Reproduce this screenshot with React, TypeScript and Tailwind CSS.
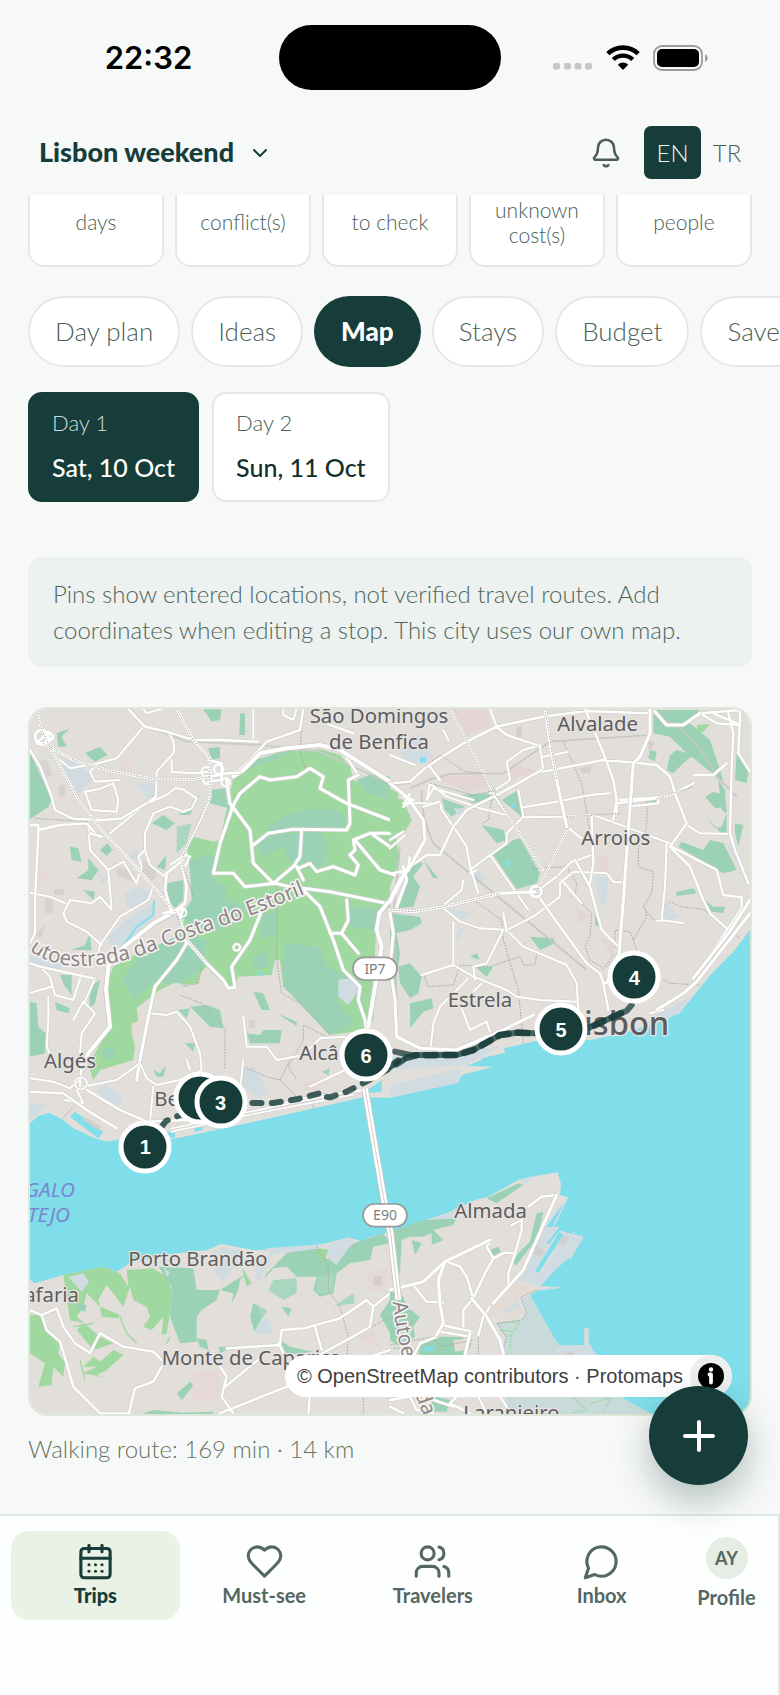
import type { ReactNode } from "react";
import { Bell, CalendarDays, ChevronDown, Plus } from "lucide-react";

const GREEN = "#9fd99f";
const TEAL = "#9bd2b5";
const HAZE = "#d0dce1";
const WATER = "#80deea";

const stats = ["days", "conflict(s)", "to check", "unknown cost(s)", "people"];
const tabs = ["Day plan", "Ideas", "Map", "Stays", "Budget", "Saved"];

/* Pin centres in map units (the view box is 2160 x 2115, starting at 30, 27). */
const pins = [
  { n: 1, x: 376, y: 1340 },
  { n: 2, x: 540, y: 1195 },
  { n: 3, x: 602, y: 1207 },
  { n: 4, x: 1843, y: 832 },
  { n: 5, x: 1623, y: 988 },
  { n: 6, x: 1038, y: 1066 },
];

function Road({ d, w = 9, casing = "#d5d2cf" }: { d: string; w?: number; casing?: string }) {
  return (
    <g fill="none" strokeLinecap="round" strokeLinejoin="round">
      <path d={d} stroke={casing} strokeWidth={w + 3} />
      <path d={d} stroke="#ffffff" strokeWidth={w - 1} />
    </g>
  );
}

function Border({ d }: { d: string }) {
  return <path d={d} fill="none" stroke="#aaa6a3" strokeWidth="3" strokeDasharray="5 4" />;
}

function Shield({ x, y, label }: { x: number; y: number; label: string }) {
  return (
    <g>
      <rect x={x - 66} y={y - 34} width="132" height="68" rx="34" fill="#fff" stroke="#999" strokeWidth="5" />
      <text x={x} y={y + 15} textAnchor="middle" fontSize="42" fill="#7d7d7d">
        {label}
      </text>
    </g>
  );
}

function CityMap() {
  return (
    <svg
      viewBox="30 27 2160 2115"
      preserveAspectRatio="xMidYMid slice"
      className="block size-full font-['Noto_Sans',sans-serif]"
      role="img"
      aria-label="Map of Lisbon"
    >
      <rect x="0" y="0" width="2220" height="2180" fill="#e2dfdb" />

      {/* river */}
      <path
        fill={WATER}
        d="M30 1270 L55 1248 88 1238 130 1260 160 1285 225 1315 260 1325 300 1318 455 1318 700 1266 1030 1192 1110 1193 1315 1148 1325 1125 1420 1100 1340 1098 1385 1080 1385 1075 1455 1058 1452 1045 1550 1022 1710 1020 1810 1000 1940 960 1990 925 2080 815 2140 755 2190 690 V2142 H1895 L1810 2100 1725 1960 1707 1930 1705 1885 1693 1885 1693 1935 1620 1937 1597 1905 1530 1785 1555 1770 1618 1762 1555 1758 1580 1720 1595 1715 1635 1660 1650 1670 1690 1610 1630 1595 1575 1580 1643 1492 1620 1485 1623 1452 1613 1417 1550 1427 1500 1438 1450 1465 1405 1490 1365 1500 1300 1530 1260 1555 1215 1560 1110 1595 1050 1610 1030 1625 985 1612 920 1630 850 1640 760 1650 700 1650 605 1632 560 1650 430 1665 330 1690 290 1715 250 1700 130 1725 45 1750 30 1740Z"
      />

      {/* north-west */}
      <path
        fill={GREEN}
        d="M640 235 L690 190 780 155 900 148 960 165 990 200 1000 240 1110 290 1150 300 1175 360 1150 395 1125 400 1140 480 1110 560 1110 620 1070 650 1065 760 1060 960 1040 990 930 1005 840 910 790 860 780 780 765 780 755 825 655 830 640 865 610 850 560 800 540 820 535 850 485 855 480 840 420 870 380 900 350 925 355 960 335 1000 345 1040 340 1080 240 1110 220 1140 205 1095 270 980 250 880 280 800 380 745 470 720 520 590 500 430 520 410 580 425 600 420Z"
      />
      <path
        fill={TEAL}
        d="M508 480 L560 465 600 480 575 530 615 560 620 600 680 620 640 670 600 690 550 700 480 650 515 600Z M360 760 L490 700 560 720 545 810 480 850 400 850 340 900 320 850 290 870Z M750 375 L800 345 880 325 950 330 975 350 980 395 820 390 745 400Z M710 440 L745 405 840 400 835 490 805 480 790 440 730 470Z M850 400 L900 395 925 430 920 480 885 515 840 490Z M790 730 L900 740 920 800 980 830 950 900 1000 970 930 1005 840 910 790 860Z M985 620 L1080 625 1070 690 990 680Z M1010 240 L1060 220 1110 230 1110 300 1040 280Z M640 225 L700 180 830 148 780 175 700 200Z M730 640 L765 640 765 700 720 720Z M700 770 L735 755 750 800 700 810Z M850 240 L875 290 862 290Z M245 1050 L285 1040 280 1075 250 1075Z
        M30 160 L50 200 95 300 85 320 30 358Z M110 100 L150 85 125 110 140 140 115 140Z M195 160 L240 140 262 165 225 185Z M550 28 H605 L600 60 575 65Z M660 40 H675 V105 H658Z M565 145 L600 140 600 175 575 180Z M575 270 L615 265 625 325 570 310Z M395 370 L430 345 465 370 440 390Z M150 440 L175 445 185 485 155 480Z M205 475 L235 510 215 540 170 535 205 510Z M240 450 L262 430 277 450 260 468Z M440 550 L490 540 490 600 465 625 440 600Z M410 500 L440 465 435 510Z M30 905 L50 910 55 980 78 1000 75 1060 30 1070Z M210 860 L240 840 225 910 208 925Z M155 750 L195 735 210 700 215 750Z M120 825 L155 825 155 885 135 860Z M105 905 L150 925 145 940 110 930Z M190 570 L225 575 220 600Z M510 920 L560 915 600 930 610 985 570 980 540 950Z M475 930 L510 925 500 955Z M700 875 L730 880 750 930 725 930Z M770 940 L830 965 830 978Z M680 1000 L720 1005 730 990 785 990 780 1030 690 1030Z M495 1030 L525 1030 520 1055Z M540 285 L510 345 475 345 510 320Z"
      />
      <path fill="#abd7c0" d="M470 380 L515 370 500 430 470 460Z" />
      <path
        fill={HAZE}
        d="M115 170 L160 185 205 215 215 240 165 290 120 205Z M345 245 L400 250 410 280 385 300Z M315 580 L355 560 395 580 390 610 320 625Z M265 710 L330 650 400 610 400 650 310 740 270 735Z M955 840 L990 835 1015 860 1010 880 985 915 955 890Z M30 765 L130 790 120 810 30 790Z M320 480 L355 445 355 480Z M230 520 L255 530 250 560Z"
      />
      <path
        fill="#d6d2cf"
        d="M60 185 L80 178 98 225 78 235Z M118 255 H136 V290 H118Z M75 595 L100 600 98 640 75 640Z M102 568 H133 V585 H102Z M290 500 L345 515 340 545 290 525Z M370 480 L400 500 410 530 390 545 360 520Z M50 700 L80 670 60 720Z M685 960 H705 V985 H685Z"
      />
      <path
        fill="#e6dad3"
        d="M300 190 L340 180 330 215 305 215Z M45 520 L100 525 80 545 45 540Z M335 970 L370 960 360 1000 335 1000Z M225 385 L260 370 270 400Z"
      />
      <path d="M402 602 L400 645 350 680 305 745 M712 825 L722 818 730 826" fill="none" stroke={WATER} strokeWidth="6" />
      <path
        d="M330 27 L380 80 500 125 720 135 900 155 1110 250"
        fill="none"
        stroke="#c9cbc9"
        strokeWidth="5"
      />
      <Border d="M770 560 L770 780 785 880 840 910 930 1005 M480 885 L545 910 615 985 615 1110 M545 800 L535 850 485 860 M850 30 L840 150 855 205 M920 1010 L850 975 850 1020 805 1100 830 1140" />
      <Road
        w={7}
        d="M375 75 L290 175 235 190 210 215 225 245 300 240 M440 95 Q470 120 460 160 L410 215 408 290 380 310 270 400 M455 180 V215 L520 220 565 215 M700 27 V125 M215 330 L195 275 235 268 280 250 295 300 290 335Z M465 265 L440 285 380 310 M465 265 L490 268 530 295 515 325 490 335 450 320 400 340 375 400 375 450 390 495 435 530 M205 370 L210 450 265 510 310 485 350 550 365 500 355 470 375 450 M265 515 L275 630 240 590 215 610 150 600 130 640 140 665 200 695 245 735 M30 578 L90 590 135 610 M400 560 L385 600 300 650 240 735 235 760 M60 800 L90 830 105 885 160 900 185 820 M30 878 L95 860 M85 890 L85 960 80 1040 100 1090 M190 905 L225 940 185 1000 180 1060 M190 905 L160 960 M225 835 L195 905 M120 180 L150 205 235 190 M370 27 L380 40 425 27 M790 27 V45 L820 60 830 27 M435 520 V600 M650 732 A10 10 0 1 0 651 732 M670 950 L680 1040 740 1040 770 1080 850 1065 900 1015 975 1010 M385 940 L440 945 470 935 510 980 540 1060 545 1110 490 1145"
      />
      <Road
        w={8}
        d="M325 27 L375 80 440 95 520 120 600 120 715 125 M850 27 L840 90 740 125 690 180 640 225 M30 150 L60 200 95 290 105 330 160 357 250 360 305 355 380 310 M30 375 L55 375 55 400 45 600 45 700 30 730 M55 390 L120 375 200 370 235 410 M30 790 L60 800 220 835 M1015 225 L975 165 M890 60 L1000 100"
      />
      <Road
        w={10}
        casing="#cdd0cb"
        d="M620 240 L630 310 690 390 700 490 760 550 820 500 840 470 845 390 M635 330 L600 430 580 520 640 520 675 560 765 550 850 570 900 620 940 720 970 810 1020 860 1015 900 1035 960 1040 990 M635 325 L660 280 720 230 750 240 830 230 870 205 910 230 900 265 980 310 1110 360 M700 435 L745 400 820 388 980 390 990 370 985 240 1015 225 M830 500 L850 540 M835 505 L870 490 890 515 940 500 1005 525 1015 495 990 465 1005 450 1000 420 1050 400 1110 400 M1005 420 L1080 510 1125 525 M1060 405 L1110 440 M850 565 L930 575 1100 610 M980 600 L985 660 965 700 930 700 M965 700 L1015 760 M475 640 L500 730 470 780 405 860 385 950 360 1080 350 1140 M500 720 L560 790 610 840 625 865 645 862 635 800 690 720 730 620"
      />
      <Road
        w={13}
        casing="#cbc8c6"
        d="M455 640 L400 670 300 750 265 800 258 870 270 980 205 1060 185 1110 M640 230 L670 210 720 160 800 145 900 135 960 150 1110 245 M1110 600 L1078 640 1070 690 1085 740 1065 860 1045 980"
      />
      <Road
        w={9}
        d="M50 30 L65 90 100 160 170 290 240 385 330 480 400 560 470 640 M70 130 L160 180 280 215 400 237 520 238 570 230 620 220 660 218 M470 27 L520 120 570 175 570 290 540 360 495 450 485 490 500 560 495 610 455 640 M455 640 L435 570 440 520 490 480 M565 180 L605 190 605 240 565 245 M45 110 a20 20 0 1 0 40 0 a20 20 0 1 0 -40 0 M70 135 L100 110 85 95 50 130Z M210 400 L245 410 M430 640 L490 625 480 655"
      />
      <path
        d="M545 215 a14 14 0 1 0 28 0 a14 14 0 1 0 -28 0 M582 208 a14 14 0 1 0 28 0 a14 14 0 1 0 -28 0 M550 240 a12 12 0 1 0 24 0 a12 12 0 1 0 -24 0 M605 247 a12 12 0 1 0 24 0 a12 12 0 1 0 -24 0 M475 638 a12 12 0 1 0 24 0 a12 12 0 1 0 -24 0 M75 110 a12 12 0 1 0 24 0 a12 12 0 1 0 -24 0 M450 495 L495 465 510 470 495 500"
        fill="none"
        stroke="#fff"
        strokeWidth="6"
      />
      <Border d="M50 30 L65 90 100 160 170 290 240 385 330 480 400 560 470 640 L500 720 560 790 M70 130 L160 180 280 215 400 237 520 238 570 230 M470 27 L520 120 570 175 570 290 495 450 485 490 520 590 M45 355 L205 365" />

      {/* north-east */}
      <g transform="translate(1110 0)">
        <path
          fill={TEAL}
          d="M790 30 L930 30 900 70 960 120 1000 240 985 235 880 150 840 110 790 100Z M840 165 L860 150 910 165 880 190 850 220 830 210Z M780 150 L800 155 795 185 775 175Z M875 425 L940 450 960 420 1000 430 1040 510 1000 520 865 440Z M945 290 L970 275 1000 285 1005 320 975 325Z M950 350 L975 385 995 380 1010 340 1010 405 965 400 990 395Z M1035 370 L1060 375 1045 440 1035 400Z M1040 160 L1075 215 1070 250 1035 240Z M985 240 L1005 270 1010 340 995 330Z M310 465 L370 420 390 415 450 520 440 550 380 568Z M258 355 L275 375 340 390 350 420 320 430Z M335 300 L385 270 395 350Z M155 295 L225 320 185 350 165 330Z M200 285 L300 280 310 300 250 310Z M420 710 L490 715 495 730 450 750Z M25 800 L60 790 95 830 85 880 60 895 30 850Z M60 910 L125 895 130 925 100 935 60 985Z M240 770 L260 760 270 780Z M255 800 L310 800 290 830Z M0 640 L90 650 95 670 60 690 20 700 30 760 10 900 0 840Z M60 480 L100 490 70 530 90 560 70 620 20 625Z M100 480 L145 535 130 535Z M615 650 L628 645 628 680 615 675Z M860 575 L910 565 920 580 860 588Z M945 600 L970 620 1005 620 1000 640 965 635Z M735 298 H800 V306 H735Z"
        />
        <path fill={GREEN} d="M920 75 L960 72 940 95 925 100Z M0 265 L25 280 20 320 65 360 45 395 0 400Z" />
        <path
          fill={HAZE}
          d="M25 150 L80 100 130 180 50 190Z M610 530 H655 L650 600 635 625Z M820 630 L840 615 870 655 820 660Z M245 540 L265 510 285 540 270 555Z M165 625 L240 640 215 660Z M200 690 L225 685 200 730Z M1010 430 L1040 450 1075 540 1070 550Z M190 325 L230 325 205 345Z M790 950 L900 890 870 940 800 965Z M0 1070 L330 1040 230 1095 0 1110Z"
        />
        <path
          fill="#e3d6d4"
          d="M185 27 H290 L305 75 230 110Z M620 470 H655 V510 H615Z M630 715 L680 730 665 770Z M365 190 L440 210 350 250Z M130 230 L280 225 300 265 230 275Z M555 620 L600 650 570 670Z"
        />
        <path fill="#d3cfcd" d="M380 85 L395 75 395 110 380 115Z M570 205 L605 195 600 220 575 220Z M775 120 L795 130 775 155Z" />
        <path fill={WATER} d="M90 172 H107 V188 H90Z M345 480 H358 V500 H348Z M365 312 H378 V322 H365Z" />
        <path
          d="M95 270 Q90 340 130 430 L300 570 590 810 M60 265 L130 235 180 222 340 220 480 125 780 105 M30 440 L10 640 20 900 M830 60 Q920 110 980 230 L1040 290"
          fill="none"
          stroke="#c6c6c4"
          strokeWidth="5"
        />
        <Border d="M520 125 L575 250 600 400 610 480 M60 250 L15 255 M772 305 L770 380 745 440 745 500 790 515 785 580 760 620 790 660 810 660 M765 625 L770 650 730 720 720 695 675 690 675 740 M430 505 L530 500 560 550 555 590 605 640 600 710 585 740 600 780 640 805 675 760 M730 720 L740 750 M250 600 L335 660 340 720 385 870 400 1030 M100 820 L115 860 190 855 210 795 300 800 390 770 400 795 435 795 440 760 M820 625 L840 605 870 620 940 628 1050 715 M820 840 L840 850 930 855 M305 300 L295 360 275 370 M690 760 L650 800" />
        <Road
          w={7}
          d="M0 165 L75 195 M450 135 L400 150 350 185 360 240 300 280 M460 170 L535 155 M450 140 L460 210 M400 322 L500 305 600 285 660 280 M400 352 L520 350 600 345 M610 345 L720 385 840 430 M385 270 L400 350 350 400 350 430 300 465 240 510 M890 375 L930 400 1020 402 M830 430 L825 560 815 660 880 670 M800 662 L830 662 M120 250 L170 290 270 325 350 345 M130 265 L250 300 M120 250 L110 300 130 265 M150 305 L155 330 190 380 230 440 240 500 265 580 M40 310 L150 310 M300 465 L415 630 M350 690 L270 685 210 665 155 620 215 570 220 540 M350 690 L430 650 510 590 510 550 550 515 650 520 670 545 705 548 M515 540 L575 610 M190 665 V795 L250 830 350 870 380 890 450 900 560 905 M190 795 L95 825 M340 690 L290 790 250 800 255 840 M350 690 L400 740 530 795 560 850 565 930 M235 835 L150 920 130 970 120 1060 M215 925 L240 990 290 965 300 995 M0 420 L40 395 M0 445 L45 405 M250 875 L275 850 M820 930 L780 940 M240 520 L260 510 M175 120 L160 90 M550 480 L500 530 M605 465 L550 485"
        />
        <Road
          w={8}
          d="M0 250 L60 245 110 200 220 130 320 80 460 50 590 33 780 40 M180 27 L230 120 290 240 320 295 370 370 460 510 M300 27 L320 80 350 105 440 135 M455 210 L330 280 230 330 190 380 150 465 110 465 60 500 M585 27 L620 110 650 185 670 240 680 300 670 360 M460 215 L640 180 730 188 800 195 840 230 855 280 890 370 840 440 M680 340 L680 310 800 295 855 280 910 250 M910 225 L970 225 1010 190 M1050 40 L1045 160 1080 215 M1015 40 L1030 100 1025 200 1020 400 1035 450 1075 550 M845 445 L900 500 940 600 960 640 1015 690 M845 440 L980 510 1000 585 1055 592 1055 625 910 840 M440 575 L535 385 M530 380 L575 415 M440 575 L500 530 M555 480 L600 560 635 690 685 740 M605 350 L610 490 600 550 M450 595 L510 680 590 790 630 820 640 850 655 930 M640 850 L700 830 M685 760 L650 850 M100 320 L150 305 M715 320 L805 310 805 292 690 300 M120 200 L150 240 M930 40 L1050 30 1050 75 980 70Z M970 40 L1040 70 M340 640 L350 695"
        />
        <Road
          w={10}
          d="M465 27 L480 130 500 240 530 380 M780 27 L780 100 750 170 730 190 715 390 700 600 685 790 M0 630 L70 635 160 620 330 580 440 575 M422 575 a16 16 0 1 0 32 0 a16 16 0 1 0 -32 0 M0 250 L50 290 100 360 105 420 60 500 30 540 0 600 M20 620 L50 540 40 500 M795 35 L830 75 880 75 930 40 M1080 600 L1015 700 910 835 M1080 640 L920 845 880 880 800 930 M0 640 L10 700 0 800 15 900 20 1010 90 1045 200 1050 340 990 430 945"
        />
        <path
          d="M0 610 L30 550 55 500 60 470 M5 520 L60 510 M20 560 L60 500 30 520 M40 290 L70 300 40 320 60 280"
          fill="none"
          stroke="#fff"
          strokeWidth="7"
          strokeLinejoin="round"
        />
        <Border d="M180 27 L230 120 290 240 370 370 460 510 M0 630 L70 635 160 620 330 580 M105 200 L150 165 225 215 285 220 M120 250 L250 285 320 270 M440 575 L535 385 M465 27 L500 240 M530 350 L690 340 M800 297 L910 260" />
      </g>

      {/* south-west */}
      <g transform="translate(0 1080)">
        <path
          fill={GREEN}
          d="M130 645 L250 620 300 640 325 680 320 630 400 625 440 650 455 690 450 760 440 820 425 825 430 770 395 810 370 800 390 770 380 740 340 720 330 680 310 740 260 675 235 720 240 740 300 765 295 775 245 770 240 740 200 700 190 740 170 770 240 830 280 850 220 870 170 810 190 790 150 780Z M30 765 L65 765 80 800 120 840 115 880 135 910 130 950 100 920 95 975 55 980 75 910 30 880Z M190 920 L220 890 240 905 280 870 310 885 260 930 230 945 300 970 260 955 190 940 230 920Z M665 620 L695 670 680 680Z M880 560 L925 570 910 620 880 600Z"
        />
        <path d="M300 770 L320 820 350 850 M180 900 L195 960 M160 800 L220 790 M450 830 L440 850" fill="none" stroke={GREEN} strokeWidth="4" />
        <path
          fill={TEAL}
          d="M415 620 L520 625 530 690 600 690 680 640 660 660 655 690 635 730 640 700 600 690 590 720 545 750 530 770 530 845 480 850 450 770 455 680Z M740 640 L800 580 880 560 900 600 960 590 1000 550 1090 520 1110 550 1060 560 1050 600 990 610 950 640 940 700 900 710 880 690 890 650 830 650 800 620 760 625 730 660Z M700 730 L740 750 705 820 690 770Z M780 840 L810 860 880 875 800 885Z M595 860 L640 860 600 880Z M530 835 L560 840 565 870 540 860Z M470 1000 L510 965 522 975 485 1020Z M370 1060 L400 1050 490 1058 580 1055 575 1065 H370Z M1080 765 L1110 720 1110 820Z M165 730 L200 735 195 755 175 750Z M400 30 L418 40 438 18 430 50 410 50Z M905 35 L930 25 925 45Z M785 740 L815 745 805 770Z"
        />
        <path fill="#a9d6be" d="M760 660 L830 655 830 700 790 720 745 690Z M890 650 L945 640 935 700 890 700Z M940 740 L1000 700 1005 730Z M710 730 L740 760 720 765Z" />
        <path
          fill={HAZE}
          d="M145 650 L190 640 207 665 185 695Z M575 580 L610 560 660 570 650 610 610 670 580 630Z M705 600 L760 580 720 660 710 660Z M730 765 L755 790 755 825 700 820Z M920 555 L990 532 1000 545 950 615 930 600Z M225 90 L260 75 310 115 290 140Z M30 130 L80 130 60 160 30 180Z M670 30 L700 20 745 95 720 115 665 80Z M430 620 L450 640 440 650Z M740 565 L920 552 900 565 750 585Z"
        />
        <path fill="#e5d8d6" d="M1040 640 L1100 620 1100 695 1045 690Z M520 940 L600 930 600 1020 515 1020Z M850 65 L890 60 890 90 855 90Z M1000 830 L1060 810 1080 860Z" />
        <path fill={WATER} d="M150 170 L165 155 250 215 235 235Z M430 215 L465 215 465 235 440 230Z M525 205 L550 200 545 212 522 215Z M570 205 L600 200 600 206Z M1050 85 L1085 60 1085 95 1040 100Z" />
        <path fill="#d3cfcd" d="M195 170 L245 200 235 210 190 180Z M1060 648 H1086 V678 H1060Z" />
        <Border d="M890 560 L925 620 925 690 960 740 985 830 980 900 M670 20 L740 50 780 60 830 110 M780 60 L810 0 M130 175 L160 140 M880 120 V150 M985 840 L1110 770 M1030 1065 L1030 1000" />
        <Road
          w={7}
          d="M400 80 L390 185 M190 80 L290 60 360 10 380 55 410 75 480 60 520 40 M670 0 L660 90 M200 150 L150 120 M30 55 L100 65 150 85 180 60 M185 0 L180 80 M135 120 L190 130 170 90 M500 0 L510 30 M870 80 L975 30 M1110 30 L1060 40"
        />
        <Road
          w={8}
          d="M30 95 L130 100 200 150 290 205 M200 90 L300 150 380 185 500 180 660 165 850 115 1030 90 M30 750 L65 765 110 745 130 800 165 850 210 880 240 820 310 860 400 875 425 900 M65 765 L80 810 120 845 140 910 160 980 240 1060 M425 920 L400 965 345 985 325 1065 M240 1060 H330 M600 920 L620 950 605 1010 640 1060 M610 985 L720 895 M780 855 L620 865 M780 855 L785 810 850 805 960 775 1040 720 1060 740 1110 700 M775 850 L790 880 M870 900 L990 835 1050 800 1060 740 M885 800 L905 870 M600 1060 L900 940 M865 1065 L870 1000 M1050 890 L1110 870"
        />
        <Road w={6} d="M455 205 L700 153 1000 92 M455 215 L700 162 1000 104 M165 70 a18 18 0 1 0 36 0 a18 18 0 1 0 -36 0" />
      </g>

      {/* south-east */}
      <g transform="translate(1110 1080)">
        <path fill="#c8dbda" d="M320 790 L395 780 410 760 395 715 420 705 487 825 510 857 590 855 615 880 700 1015 785 1062 350 1062 340 880 345 830Z" />
        <path
          fill={HAZE}
          d="M385 660 L430 555 455 500 510 500 480 550 435 635 450 640 480 600 520 515 580 535 540 590 490 635 450 680Z M320 755 L370 710 390 735 380 760Z M0 75 L215 25 205 68 0 113Z M390 358 L440 347 400 375Z M105 480 L200 450 200 470 120 490Z M497 870 L510 857 590 855 583 805 H595 V850 L620 885 H500Z"
        />
        <path fill="#d2cfce" d="M435 555 L465 570 455 590 425 580Z M520 525 L540 535 525 560 508 550Z M530 875 H552 V885 H530Z" />
        <path
          fill={TEAL}
          d="M290 415 L385 370 400 375 320 430Z M0 515 L100 480 200 475 190 495 130 510 160 540 125 555 125 520 95 530 60 530 35 540 30 640 15 650Z M65 540 L95 550 75 585Z M440 460 L460 455 450 500 430 550 380 615 365 610 385 580 420 545 430 500Z M300 570 L325 560 333 575 310 588Z M0 690 L40 710 50 740 90 770 70 800 75 830 30 860 0 840Z M75 860 L150 830 215 830 245 850 230 885 90 885Z M140 1010 L180 1020 170 1055 100 1055Z"
        />
        <path fill="#e3dcd6" d="M350 680 L400 670 440 690 390 715 330 760 310 775 390 740 410 760 350 780 290 760Z M190 840 L240 835 230 870 195 875Z" />
        <path fill={WATER} d="M435 632 L508 515 520 525 445 640Z M470 550 L510 500 514 506 476 554Z M100 865 L135 855 130 870 105 875Z" />
        <path d="M320 790 L390 785 370 815 330 810 M350 830 L365 825 360 870 M550 1010 L590 1050 540 1060 M600 1030 L660 1015 640 1060 M10 865 H30" fill="none" stroke="#a6dbb2" strokeWidth="4" />
        <path d="M465 500 L530 415 M533 412 L490 500 M445 690 L508 682 M520 560 L555 515 M540 598 L578 528" fill="none" stroke={HAZE} strokeWidth="5" />
        <Border d="M440 690 L392 712 410 760 395 780 320 790 350 830 335 880 M0 855 L130 830 150 860 250 840 M265 825 V885" />
        <Road
          w={8}
          d="M500 405 L455 410 415 440 M365 495 L395 480 395 510 375 580 355 640 355 685 M300 545 L290 560 310 595 345 578 375 580 M310 595 L285 640 250 715 220 750 220 800 M170 605 L210 620 230 650 250 715 M70 675 L110 725 160 728 M300 740 L280 770 265 825 M140 830 L90 850 70 890 M0 1020 L60 1010 80 1050 130 1060 M200 1010 L180 1030 240 1060 M265 1010 L290 1060 M330 1010 L350 1040 M0 1040 L40 1060 M150 815 L240 830 245 815 155 795Z M100 1010 L190 1040"
        />
        <Road
          w={10}
          d="M500 405 L440 540 400 630 350 685 310 730 M300 540 L165 605 100 665 0 690 M165 605 L145 660 150 730 160 790 140 825 M245 715 L290 770 330 840 340 880 M240 820 L225 885"
        />
      </g>

      {/* suspension bridge */}
      <path d="M1035 1165 L1092 1500 1112 1600 1135 1800" fill="none" stroke="#c9c7c5" strokeWidth="22" />
      <path d="M1035 1165 L1092 1500 1112 1600 1135 1800" fill="none" stroke="#fff" strokeWidth="17" />
      <path d="M1035 1165 L1092 1500 1112 1600 1135 1800" fill="none" stroke="#d2d0ce" strokeWidth="3" />

      <defs>
        <path id="a5" d="M28 750 Q90 800 190 798 Q300 795 400 752 Q480 722 560 694 Q660 662 860 580 L920 555" />
        <path id="a2" d="M1118 1806 Q1132 1930 1160 2010 T1222 2180" />
      </defs>
      <g fontSize="62" fill="#8f8587" stroke="#f4f2f1" strokeWidth="10" strokeLinejoin="round" paintOrder="stroke">
        <text>
          <textPath href="#a5">utoestrada da Costa do Estoril</textPath>
        </text>
        <text>
          <textPath href="#a2">Autoestrada</textPath>
        </text>
      </g>
      <Shield x={1065} y={806} label="IP7" />
      <Shield x={1095} y={1546} label="E90" />
      <g fontSize="61" fill="#5c5c5e" stroke="#e6e3e0" strokeWidth="8" strokeLinejoin="round" paintOrder="stroke">
        <text x="1077" y="70" textAnchor="middle">São Domingos</text>
        <text x="1077" y="147" textAnchor="middle">de Benfica</text>
        <text x="1612" y="92">Alvalade</text>
        <text x="1684" y="435">Arroios</text>
        <text x="1283" y="922">Estrela</text>
        <text x="838" y="1080">Alcântara</text>
        <text x="72" y="1104">Algés</text>
        <text x="403" y="1218">Belém</text>
        <text x="325" y="1697">Porto Brandão</text>
        <text x="177" y="1805" textAnchor="end">Trafaria</text>
        <text x="425" y="1994">Monte de Caparica</text>
        <text x="1303" y="1553">Almada</text>
        <text x="1330" y="2159">Laranjeiro</text>
        <text x="1948" y="1006" textAnchor="end" fontSize="98" fontWeight="500">Lisbon</text>
      </g>
      <g fontSize="62" fontStyle="italic" fill="#7a86d2" textAnchor="end">
        <text x="165" y="1490">GARGALO</text>
        <text x="150" y="1567">DO TEJO</text>
      </g>

      {/* walking route */}
      <g fill="none" stroke="#173d3a" strokeLinecap="round" strokeLinejoin="round">
        <path
          strokeWidth="18"
          strokeDasharray="27 31"
          opacity="0.82"
          d="M425 1280 L438 1263 480 1245 540 1220 600 1215 690 1209 760 1209 830 1198 898 1180 905 1190 930 1192 980 1175 1038 1145 1110 1105 1150 1080"
        />
        <path
          strokeWidth="18"
          opacity="0.75"
          d="M1125 1055 L1170 1065 1310 1065 1360 1050 1440 1005 1490 998 1550 1000 1630 995 1710 982 1770 955 1820 932 1835 915"
        />
        <path
          strokeWidth="20"
          strokeDasharray="30 28"
          opacity="0.85"
          d="M1110 1100 L1140 1078 1190 1066 1310 1065 1360 1050 1440 1005 1490 998 1550 1000 1630 995 1710 982 1770 955 1820 932"
        />
      </g>
    </svg>
  );
}

function Glyph({ children }: { children: ReactNode }) {
  return (
    <svg
      viewBox="0 0 24 24"
      className="size-[39px]"
      fill="none"
      stroke="currentColor"
      strokeWidth="1.9"
      strokeLinecap="round"
      strokeLinejoin="round"
      aria-hidden="true"
    >
      {children}
    </svg>
  );
}

function StatusBar() {
  return (
    <div className="grid grid-cols-[1fr_222px_1fr] items-center pt-[25px]">
      <span className="pl-[18px] text-center font-['Inter',sans-serif] text-[31px] leading-[64px] font-semibold text-black">22:32</span>
      <div className="h-[65px] rounded-full bg-black" />
      <div className="flex items-center justify-end gap-[13px] pr-[71px]">
        <svg width="40" height="26" viewBox="0 0 40 26" fill="#c6c8c7" aria-hidden="true">
          <rect x="0" y="18" width="7" height="6.5" rx="2" />
          <rect x="11" y="18" width="7" height="6.5" rx="2" />
          <rect x="21.500" y="18" width="7" height="6.5" rx="2" />
          <rect x="32" y="18" width="7" height="6.5" rx="2" />
        </svg>
        <svg width="34" height="26" viewBox="0 0 34 26" fill="none" stroke="#000" aria-hidden="true">
          <path d="M1.800 8.700a22 22 0 0 1 30.400 0" strokeWidth="4.600" />
          <path d="M7.300 14.500a14 14 0 0 1 19.400 0" strokeWidth="4.400" />
          <path d="M17 25l-5.200-5.300a7.400 7.400 0 0 1 10.400 0z" fill="#000" stroke="none" />
        </svg>
        <svg width="56" height="26" viewBox="0 0 56 26" aria-hidden="true">
          <rect x="1" y="1" width="48" height="24" rx="8" fill="none" stroke="#9a9c9b" strokeWidth="1.800" />
          <rect x="4" y="4" width="42" height="18" rx="5" fill="#000" />
          <path d="M52 9a5 4.500 0 0 1 0 8z" fill="#9a9c9b" />
        </svg>
      </div>
    </div>
  );
}

export default function App() {
  return (
    <div className="flex min-h-screen flex-col overflow-hidden bg-[#f7f9f8] font-['Lato',sans-serif] text-[#4b5f5a]">
      <header>
        <StatusBar />
        <div className="flex h-[105px] items-center justify-between pt-5 pr-[27px] pl-[39px]">
          <button className="flex items-center gap-[14px] text-[27px] font-black text-[#173d3a]">
            Lisbon weekend
            <ChevronDown size={24} strokeWidth={2} />
          </button>
          <div className="flex items-center">
            <button aria-label="Notifications" className="mr-[22px]">
              <Bell size={32} strokeWidth={1.9} />
            </button>
            <button className="h-[53px] w-[57px] rounded-[7px] bg-[#173d3a] text-[24px] font-light text-[#f0f4f3]">EN</button>
            <button className="h-[53px] w-[52px] text-[24px] font-light">TR</button>
          </div>
        </div>
      </header>

      <main className="relative flex-1">
        <ul className="mx-7 grid grid-cols-5 gap-[11px]">
          {stats.map((s) => (
            <li
              key={s}
              className="flex h-[72px] items-center justify-center rounded-b-2xl border-2 border-t-0 border-[#e4e9e7] bg-white px-4 pb-[17px] text-center text-[21px] leading-[25px] font-light"
            >
              {s}
            </li>
          ))}
        </ul>

        <nav aria-label="Trip sections" className="mt-[29px] ml-7 flex gap-[11px] overflow-hidden">
          {tabs.map((t) => (
            <button
              key={t}
              className={
                t === "Map"
                  ? "h-[71px] shrink-0 rounded-full bg-[#173d3a] px-[27px] text-[26px] font-black text-white"
                  : "h-[71px] shrink-0 rounded-full border-2 border-[#e4e9e7] bg-white px-[25px] text-[26px] font-light"
              }
            >
              {t}
            </button>
          ))}
        </nav>

        <div className="mt-[25px] ml-7 flex gap-[13px]">
          <button className="flex h-[110px] flex-col justify-center gap-3 rounded-[14px] border-2 border-[#173d3a] bg-[#173d3a] px-[22px] text-left">
            <span className="text-[22px] leading-7 font-light text-[#d3dddb]">Day 1</span>
            <span className="text-[25px] leading-9 font-medium text-white">Sat, 10 Oct</span>
          </button>
          <button className="flex h-[110px] flex-col justify-center gap-3 rounded-[14px] border-2 border-[#e4e9e7] bg-white px-[22px] text-left">
            <span className="text-[22px] leading-7 font-light">Day 2</span>
            <span className="text-[25px] leading-9 font-medium text-[#142f2b]">Sun, 11 Oct</span>
          </button>
        </div>

        <p className="mx-7 mt-[55px] rounded-[14px] bg-[#edf1f0] px-[25px] py-[19px] text-[24px] leading-9 font-light text-[#4d665c]">
          Pins show entered locations, not verified travel routes. Add coordinates when editing a stop. This city uses our own map.
        </p>

        <section className="relative mx-7 mt-10 aspect-[724/709] overflow-hidden rounded-[20px] border-2 border-[#dfe6da]">
          <CityMap />
          {pins.map((p) => (
            <button
              key={p.n}
              aria-label={`Stop ${p.n}`}
              className="absolute size-[53px] -translate-1/2 rounded-full border-[5px] border-white bg-[#173d3a] font-['Liberation_Sans',sans-serif] text-[20px] leading-5 font-bold text-white"
              style={{ left: `${((p.x - 30) / 2160) * 100}%`, top: `${((p.y - 27) / 2115) * 100}%` }}
            >
              {p.n}
            </button>
          ))}
          <div className="absolute right-[18px] bottom-[17px] flex h-[42px] items-center rounded-full bg-white pl-3 font-['Liberation_Sans',sans-serif] text-[20px] text-[#404040]">
            <span className="pr-[7px]">© OpenStreetMap contributors · Protomaps</span>
            <button aria-label="Toggle attribution" className="flex size-[42px] items-center justify-center rounded-full bg-[#eeeeee]">
              <svg width="26" height="26" viewBox="0 0 26 26" aria-hidden="true">
                <circle cx="13" cy="13" r="13" fill="#000" />
                <circle cx="13" cy="6.500" r="2.200" fill="#fff" />
                <path d="M11.500 11.500h1.500v8" fill="none" stroke="#fff" strokeWidth="3.800" strokeLinecap="round" strokeLinejoin="round" />
              </svg>
            </button>
          </div>
        </section>

        <p className="mx-7 mt-[15px] pb-[46px] text-[24px] leading-9 font-light text-[#66755f]">Walking route: 169 min · 14 km</p>

        <button
          aria-label="Add stop"
          className="absolute right-8 bottom-[29px] z-10 flex size-[99px] items-center justify-center rounded-full bg-[#173d3a] text-white shadow-[0_16px_36px_rgba(23,61,58,0.3)]"
        >
          <Plus size={48} strokeWidth={2} />
        </button>
      </main>

      <nav
        aria-label="Main"
        className="grid h-[181px] grid-cols-[repeat(4,1fr)_81px] items-start border-t-2 border-r-2 border-[#e2e8e5] bg-[#fdfefe] px-[11px] pt-[15px] text-[20px] leading-6 font-bold text-[#546762]"
      >
        <a href="#trips" className="flex h-[89px] flex-col items-center gap-[2px] rounded-[18px] bg-[#eaf1e5] pt-[11px] font-black text-[#173d3a]">
          <CalendarDays size={39} strokeWidth={1.9} />
          Trips
        </a>
        <a href="#must-see" className="flex h-[89px] flex-col items-center gap-[2px] pt-[11px]">
          <Glyph>
            <path d="M19 14c1.490-1.460 3-3.210 3-5.500A5.500 5.500 0 0 0 16.500 3c-1.760 0-3 .5-4.500 2-1.500-1.500-2.740-2-4.500-2A5.500 5.500 0 0 0 2 8.500c0 2.300 1.500 4.050 3 5.500l7 7Z" />
          </Glyph>
          Must-see
        </a>
        <a href="#travelers" className="flex h-[89px] flex-col items-center gap-[2px] pt-[11px]">
          <Glyph>
            <path d="M16 21v-2a4 4 0 0 0-4-4H6a4 4 0 0 0-4 4v2" />
            <circle cx="9" cy="7" r="4" />
            <path d="M22 21v-2a4 4 0 0 0-3-3.870" />
            <path d="M16 3.130a4 4 0 0 1 0 7.750" />
          </Glyph>
          Travelers
        </a>
        <a href="#inbox" className="flex h-[89px] flex-col items-center gap-[2px] pt-[11px]">
          <Glyph>
            <path d="M7.900 20A9 9 0 1 0 4 16.100L2 22Z" />
          </Glyph>
          Inbox
        </a>
        <a href="#profile" className="flex h-[89px] flex-col items-center gap-[6px] pt-[6px]">
          <span className="flex size-[42px] items-center justify-center rounded-full bg-[#e6ede4] text-[18px]">AY</span>
          Profile
        </a>
      </nav>
    </div>
  );
}
